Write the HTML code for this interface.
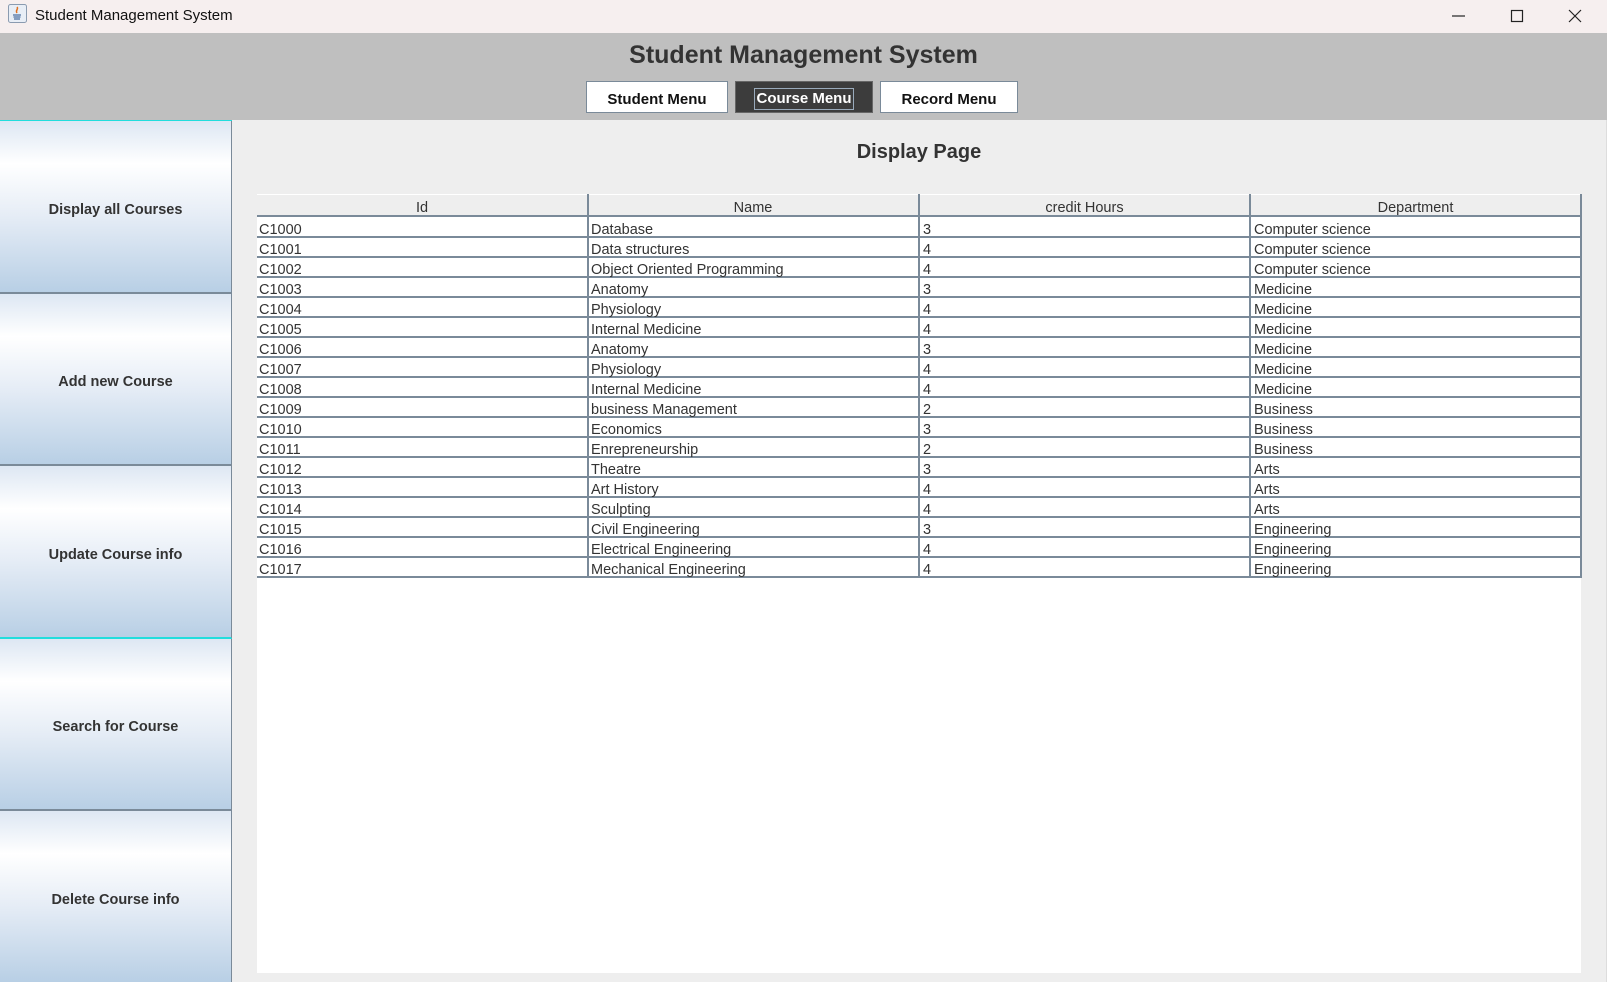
<!DOCTYPE html>
<html><head><meta charset="utf-8"><style>
*{margin:0;padding:0;box-sizing:border-box}
body{width:1607px;height:982px;overflow:hidden;background:#eeeeee;font-family:"Liberation Sans",Arial,sans-serif;position:relative}
.tb{position:absolute;left:0;top:0;width:1607px;height:33px;background:#f6efef;}
.tb .t{position:absolute;left:35px;top:7px;font-size:15px;color:#111}
.hdr{position:absolute;left:0;top:33px;width:1607px;height:87px;background:#bfbfbf}
.hdr h1{position:absolute;left:0;width:1607px;top:8px;text-align:center;font-size:25px;font-weight:bold;color:#333}
.mb{position:absolute;top:81px;height:32px;background:#fff;border:1px solid #7a8a99;font-weight:bold;font-size:15px;text-align:center;line-height:36px;color:#111}
.lp{position:absolute;left:0;width:232px;border-right:1px solid #7a8a99;border-bottom:2px solid #7a8a99;background:linear-gradient(#dde7f3 0%,#ffffff 25%,#e6edf6 55%,#b8cfe5 100%);font-weight:bold;font-size:14.5px;color:#333;text-align:center;display:flex;align-items:center;justify-content:center;padding-top:6px}
.panel{position:absolute;left:257px;top:194px;width:1324px;height:779px;background:#fff}
.dp{position:absolute;left:257px;width:1324px;top:141px;text-align:center;font-size:20px;font-weight:bold;color:#333}
.th{position:absolute;top:194px;height:23px;background:#eeeeee;border-top:1px solid #fff;border-bottom:2px solid #7a8a99;font-size:14.5px;color:#333;text-align:center;line-height:27px}
.row{position:absolute;left:257px;width:1324px;height:20px;border-bottom:2px solid #7a8a99;font-size:14.5px;color:#333}
.row span{position:absolute;top:3px;line-height:18px;padding-left:2px}
.vl{position:absolute;top:194px;width:2px;height:384px;background:#7a8a99}
</style></head><body>
<div class="tb">
<svg style="position:absolute;left:8px;top:4px" width="19" height="19" viewBox="0 0 19 19"><rect x="0.5" y="0.5" width="18" height="18" rx="2" fill="#e8eef6" stroke="#8a9bb0"/><path d="M9 3c2 2-2 3 0 6" stroke="#e07020" fill="none" stroke-width="1.5"/><path d="M5 11h8M5.5 13h7M6 15h6" stroke="#4a6fa0" stroke-width="1.2"/></svg>
<span class="t">Student Management System</span>
<svg style="position:absolute;left:1452px;top:8px" width="140" height="16"><path d="M0 8h13" stroke="#222" stroke-width="1.2"/><rect x="59.5" y="2.5" width="11" height="11" fill="none" stroke="#222" stroke-width="1.2"/><path d="M117 2l12 12M129 2l-12 12" stroke="#222" stroke-width="1.2"/></svg>
</div>
<div style="position:absolute;right:0;top:33px;width:1px;height:949px;background:#ddd"></div>
<div class="hdr"><h1>Student Management System</h1></div>
<div class="mb" style="left:586px;width:142px">Student Menu</div>
<div class="mb" style="left:735px;width:138px;background:#3c3c3c;color:#fff;border-color:#666;line-height:30px"><span style="border:1px solid #9ab;padding:0 1px;line-height:20px;display:inline-block;margin-top:6px">Course Menu</span></div>
<div class="mb" style="left:880px;width:138px">Record Menu</div>
<div style="position:absolute;left:0;top:120px;width:232px;height:1px;background:#22dddd"></div>
<div class="lp" style="top:121px;height:173px">Display all Courses</div>
<div class="lp" style="top:294px;height:172px">Add new Course</div>
<div class="lp" style="top:466px;height:173px;border-bottom:2px solid #22dddd">Update Course info</div>
<div class="lp" style="top:639px;height:172px">Search for Course</div>
<div class="lp" style="top:811px;height:171px;border-bottom:none">Delete Course info</div>
<div class="dp">Display Page</div>
<div class="panel"></div>
<div class="th" style="left:257px;width:330px">Id</div>
<div class="th" style="left:587px;width:332px">Name</div>
<div class="th" style="left:919px;width:331px">credit Hours</div>
<div class="th" style="left:1250px;width:331px">Department</div>
<div class="row" style="top:218px"><span style="left:0">C1000</span><span style="left:332px">Database</span><span style="left:664px">3</span><span style="left:995px">Computer science</span></div>
<div class="row" style="top:238px"><span style="left:0">C1001</span><span style="left:332px">Data structures</span><span style="left:664px">4</span><span style="left:995px">Computer science</span></div>
<div class="row" style="top:258px"><span style="left:0">C1002</span><span style="left:332px">Object Oriented Programming</span><span style="left:664px">4</span><span style="left:995px">Computer science</span></div>
<div class="row" style="top:278px"><span style="left:0">C1003</span><span style="left:332px">Anatomy</span><span style="left:664px">3</span><span style="left:995px">Medicine</span></div>
<div class="row" style="top:298px"><span style="left:0">C1004</span><span style="left:332px">Physiology</span><span style="left:664px">4</span><span style="left:995px">Medicine</span></div>
<div class="row" style="top:318px"><span style="left:0">C1005</span><span style="left:332px">Internal Medicine</span><span style="left:664px">4</span><span style="left:995px">Medicine</span></div>
<div class="row" style="top:338px"><span style="left:0">C1006</span><span style="left:332px">Anatomy</span><span style="left:664px">3</span><span style="left:995px">Medicine</span></div>
<div class="row" style="top:358px"><span style="left:0">C1007</span><span style="left:332px">Physiology</span><span style="left:664px">4</span><span style="left:995px">Medicine</span></div>
<div class="row" style="top:378px"><span style="left:0">C1008</span><span style="left:332px">Internal Medicine</span><span style="left:664px">4</span><span style="left:995px">Medicine</span></div>
<div class="row" style="top:398px"><span style="left:0">C1009</span><span style="left:332px">business Management</span><span style="left:664px">2</span><span style="left:995px">Business</span></div>
<div class="row" style="top:418px"><span style="left:0">C1010</span><span style="left:332px">Economics</span><span style="left:664px">3</span><span style="left:995px">Business</span></div>
<div class="row" style="top:438px"><span style="left:0">C1011</span><span style="left:332px">Enrepreneurship</span><span style="left:664px">2</span><span style="left:995px">Business</span></div>
<div class="row" style="top:458px"><span style="left:0">C1012</span><span style="left:332px">Theatre</span><span style="left:664px">3</span><span style="left:995px">Arts</span></div>
<div class="row" style="top:478px"><span style="left:0">C1013</span><span style="left:332px">Art History</span><span style="left:664px">4</span><span style="left:995px">Arts</span></div>
<div class="row" style="top:498px"><span style="left:0">C1014</span><span style="left:332px">Sculpting</span><span style="left:664px">4</span><span style="left:995px">Arts</span></div>
<div class="row" style="top:518px"><span style="left:0">C1015</span><span style="left:332px">Civil Engineering</span><span style="left:664px">3</span><span style="left:995px">Engineering</span></div>
<div class="row" style="top:538px"><span style="left:0">C1016</span><span style="left:332px">Electrical Engineering</span><span style="left:664px">4</span><span style="left:995px">Engineering</span></div>
<div class="row" style="top:558px"><span style="left:0">C1017</span><span style="left:332px">Mechanical Engineering</span><span style="left:664px">4</span><span style="left:995px">Engineering</span></div>
<div class="vl" style="left:587px"></div>
<div class="vl" style="left:918px"></div>
<div class="vl" style="left:1249px"></div>
<div class="vl" style="left:1580px"></div>
</body></html>
